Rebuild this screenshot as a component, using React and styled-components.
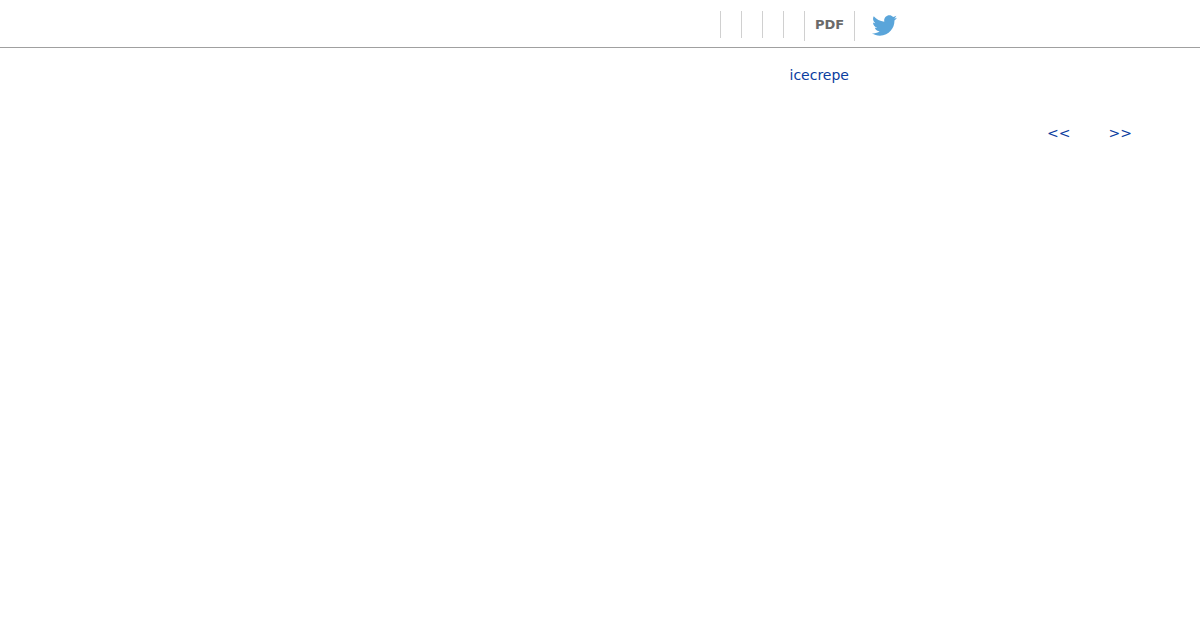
import React from "react";
import styled, { createGlobalStyle } from "styled-components";
import { FaTwitter } from "react-icons/fa";

const GlobalStyle = createGlobalStyle`
  html, body {
    margin: 0;
    padding: 0;
    background: #fff;
    font-family: "DejaVu Sans", sans-serif;
  }
`;

const Header = styled.header`
  height: 47px;
  border-bottom: 1px solid #a0a0a0;
  display: flex;
  padding-left: 720px;
`;

const Tool = styled.div`
  width: 20px;
  height: 27px;
  margin-top: 11px;
  border-left: 1px solid #d0d0d0;
`;

const PdfTool = styled.a`
  width: 51px;
  height: 30px;
  margin-top: 11px;
  border-left: 1px solid #d0d0d0;
  border-right: 1px solid #d0d0d0;
  box-sizing: border-box;
  padding-left: 10px;
  font-size: 13px;
  font-weight: bold;
  line-height: 27px;
  color: #6a6a6a;
`;

const TwitterLink = styled.a`
  margin-left: 17px;
  margin-top: 13px;
  color: #5aa5da;
  font-size: 25px;
  line-height: 0;
`;

const Author = styled.div`
  padding: 19px 0 0 789.5px;
  font-size: 14px;
  line-height: 17px;
`;

const Link = styled.a`
  color: #0a3da0;
  text-decoration: none;
`;

const Pager = styled.div`
  display: flex;
  justify-content: flex-end;
  gap: 38px;
  padding: 41px 68px 0 0;
  font-size: 14px;
  line-height: 17px;
`;

export default function App() {
  return (
    <>
      <GlobalStyle />
      <Header>
        <Tool />
        <Tool />
        <Tool />
        <Tool />
        <PdfTool>PDF</PdfTool>
        <TwitterLink>
          <FaTwitter />
        </TwitterLink>
      </Header>
      <Author>
        <Link>icecrepe</Link>
      </Author>
      <Pager>
        <Link>&lt;&lt;</Link>
        <Link>&gt;&gt;</Link>
      </Pager>
    </>
  );
}
